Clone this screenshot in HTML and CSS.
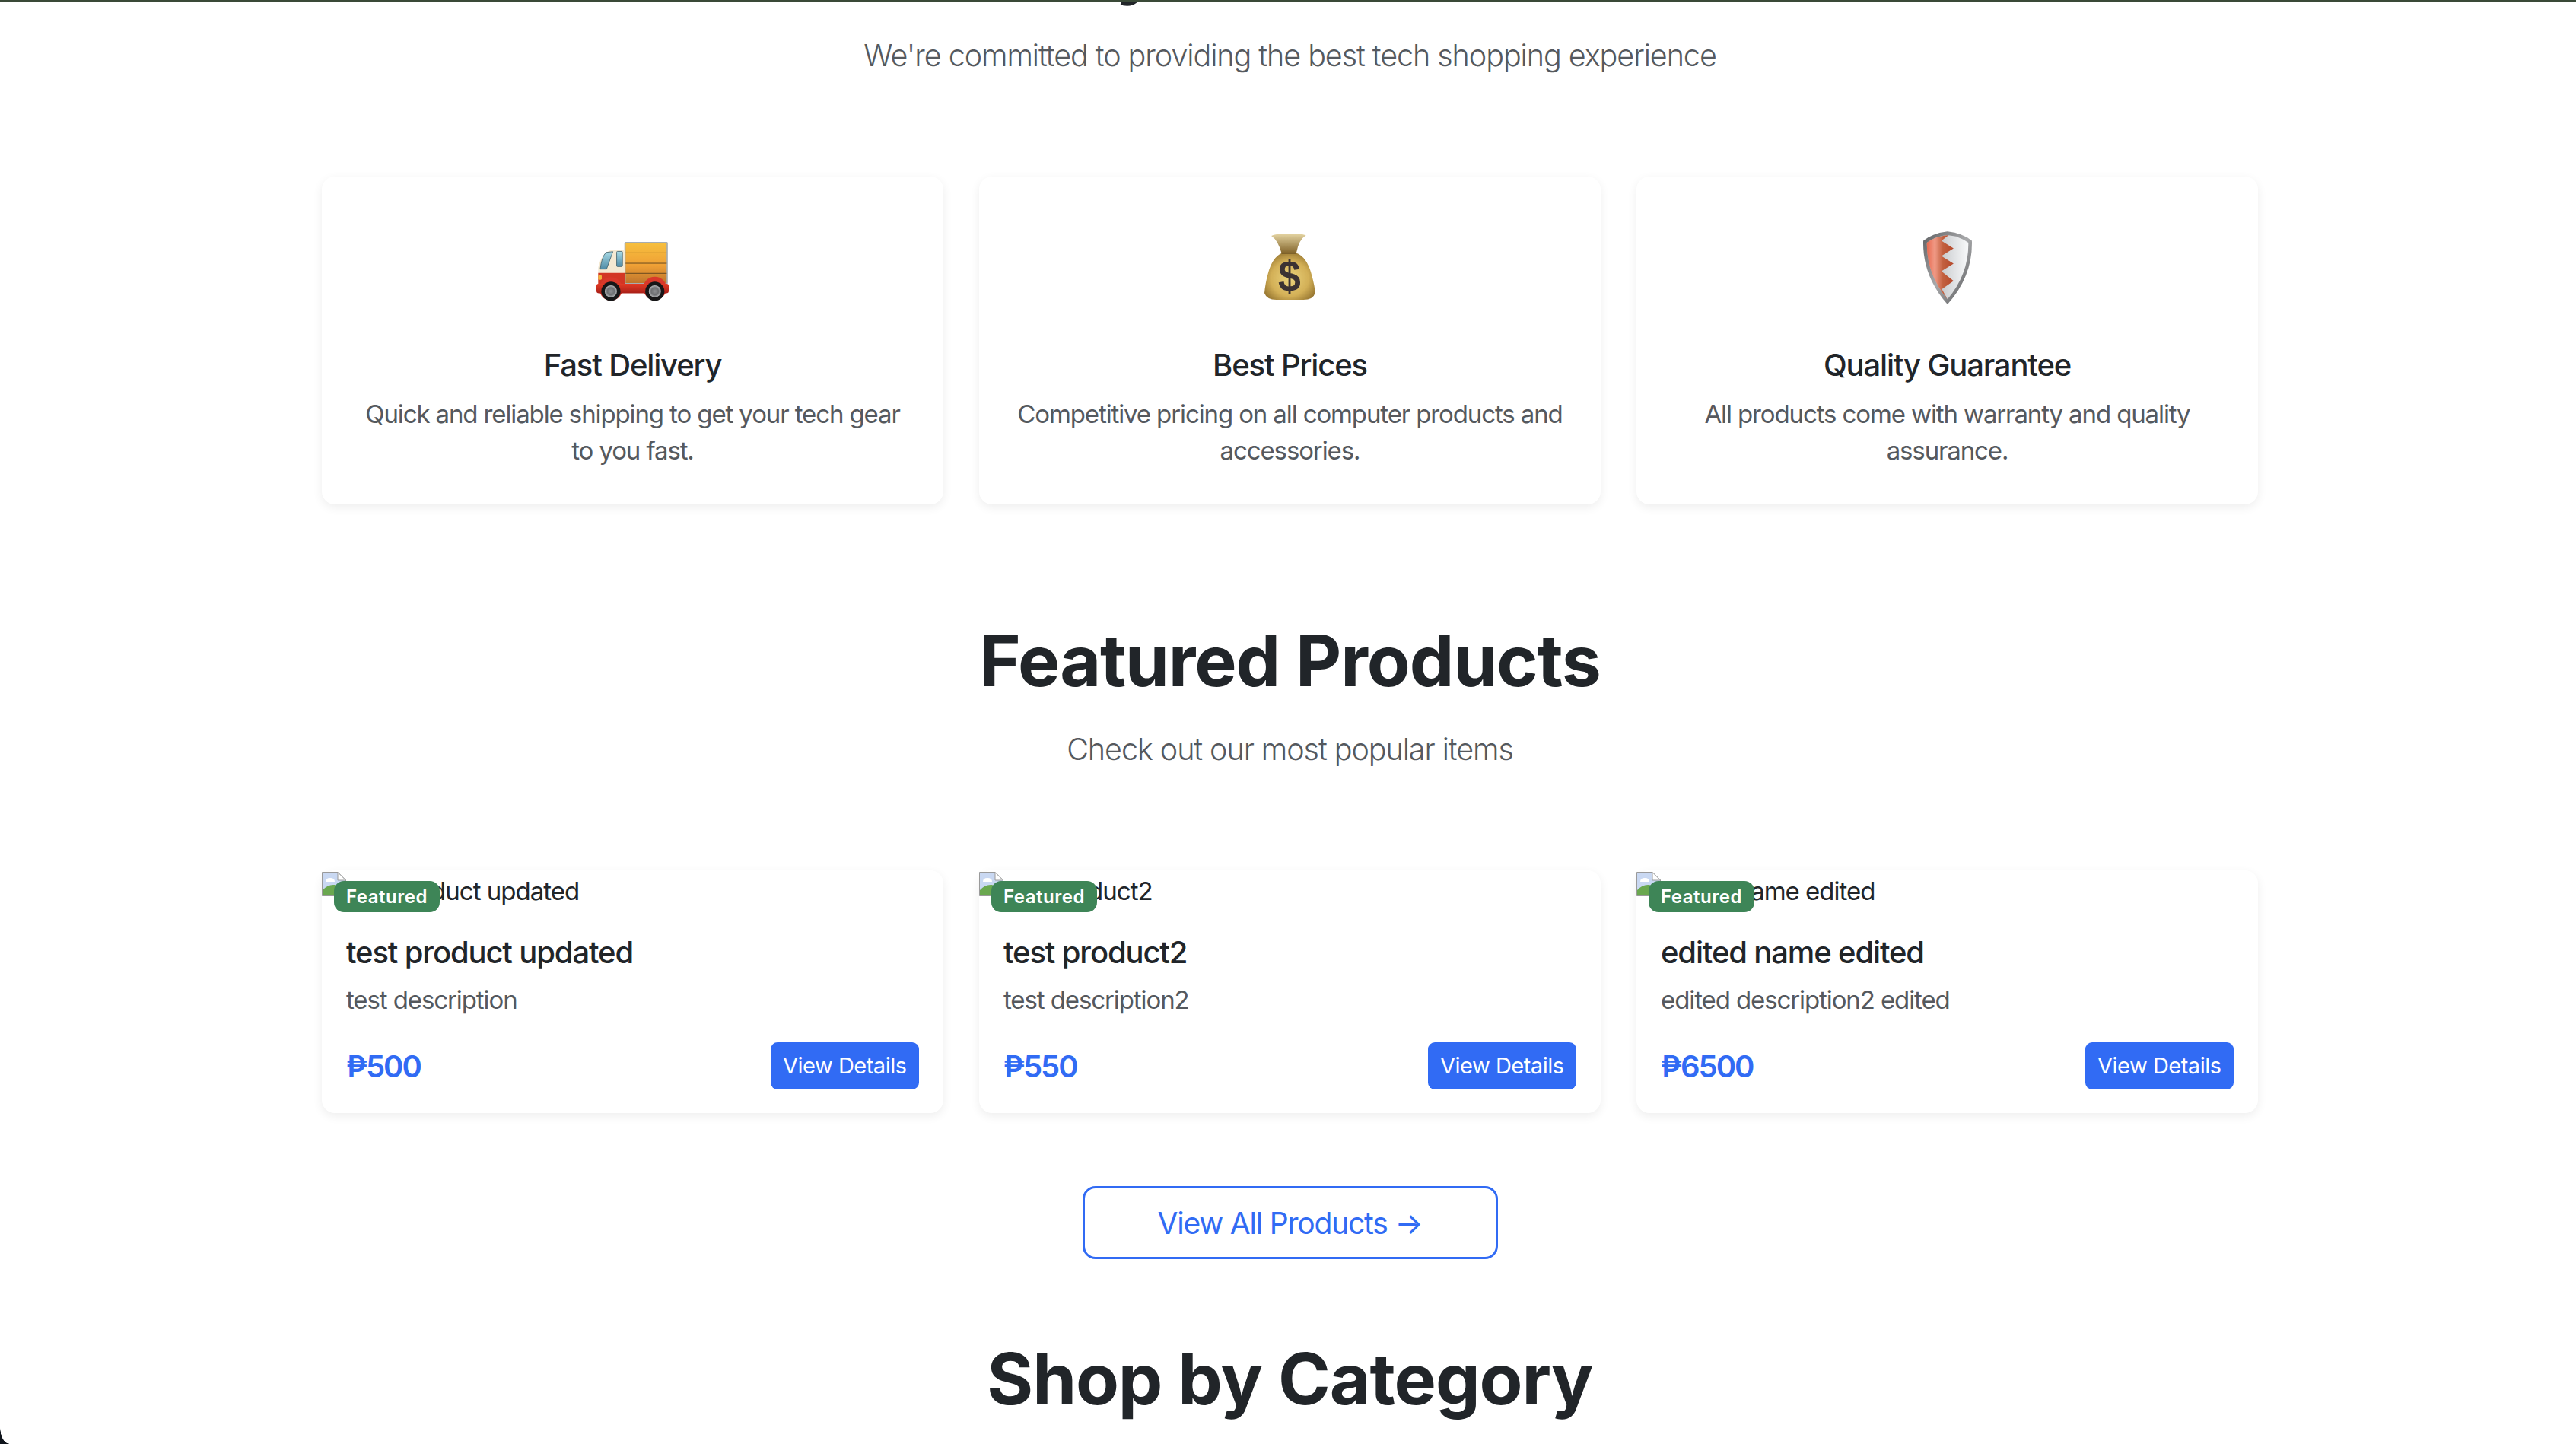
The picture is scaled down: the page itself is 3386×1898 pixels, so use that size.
FILE: index.html
```html
<!DOCTYPE html>
<html lang="en">
<head>
    <meta charset="UTF-8">
    <meta name="viewport" content="width=device-width, initial-scale=1.0">
    <title>Tech Shop</title>
    <link rel="stylesheet" href="styles.css">
</head>
<body>
    <div class="window">
        <main class="page">
            <section class="why">
                <h2 class="section-title">Why Choose Us?</h2>
                <p class="section-lead">We're committed to providing the best tech shopping experience</p>

                <div class="card-row">
                    <div class="card feature">
                        <div class="feature-icon">
                            <svg class="icon-truck" width="95" height="78" viewBox="130 115 286 234">
                                <defs>
                                    <linearGradient id="cargo" x1="0" y1="0" x2="0" y2="1">
                                        <stop offset="0" stop-color="#f7c03e"/>
                                        <stop offset="0.55" stop-color="#efa035"/>
                                        <stop offset="1" stop-color="#bd742c"/>
                                    </linearGradient>
                                    <linearGradient id="glass" x1="0" y1="0" x2="0" y2="1">
                                        <stop offset="0" stop-color="#a9dbe6"/>
                                        <stop offset="1" stop-color="#4f8ba6"/>
                                    </linearGradient>
                                    <linearGradient id="chassis" x1="0" y1="0" x2="0" y2="1">
                                        <stop offset="0" stop-color="#e33b25"/>
                                        <stop offset="1" stop-color="#a91f18"/>
                                    </linearGradient>
                                    <radialGradient id="hub">
                                        <stop offset="0" stop-color="#8d8f92"/>
                                        <stop offset="0.6" stop-color="#6d6f72"/>
                                        <stop offset="1" stop-color="#b6b8ba"/>
                                    </radialGradient>
                                </defs>
                                <rect x="243" y="117" width="167" height="163" rx="3" fill="url(#cargo)" stroke="#a7adb0" stroke-width="5"/>
                                <path d="M245 158H408M245 199H408M245 239H408" stroke="#6a4a1f" stroke-width="3"/>
                                <path d="M242 146H192Q150 155 137 216V284H242Z" fill="#f4e9d2"/>
                                <path d="M195 153L168 156Q150 175 145 222H170Z" fill="url(#glass)" stroke="#3f5f6b" stroke-width="2.5"/>
                                <rect x="210" y="152" width="23" height="60" rx="3" fill="url(#glass)" stroke="#3f5f6b" stroke-width="2.5"/>
                                <path d="M137 237H242V284H137Z" fill="#d33624"/>
                                <rect x="137" y="246" width="14" height="18" rx="4" fill="#f2b33d"/>
                                <circle cx="187" cy="300" r="46" fill="#d9382a"/>
                                <circle cx="361" cy="298" r="46" fill="#d9382a"/>
                                <path d="M130 288Q130 280 138 280H408Q416 280 416 288V308Q416 318 406 318H140Q130 318 130 308Z" fill="url(#chassis)"/>
                                <circle cx="187" cy="310" r="38" fill="#161617"/>
                                <circle cx="361" cy="310" r="38" fill="#161617"/>
                                <circle cx="187" cy="310" r="24" fill="url(#hub)"/>
                                <circle cx="361" cy="310" r="24" fill="url(#hub)"/>
                            </svg>
                        </div>
                        <h3 class="feature-name">Fast Delivery</h3>
                        <p class="feature-text">Quick and reliable shipping to get your tech gear to you fast.</p>
                    </div>

                    <div class="card feature">
                        <div class="feature-icon">
                            <svg class="icon-bag" width="67" height="87" viewBox="97 68 200 240" preserveAspectRatio="none">
                                <defs>
                                    <radialGradient id="sack" cx="0.5" cy="0.55" r="0.62">
                                        <stop offset="0" stop-color="#ead27c"/>
                                        <stop offset="0.6" stop-color="#d3b057"/>
                                        <stop offset="1" stop-color="#8f6f2c"/>
                                    </radialGradient>
                                    <linearGradient id="frill" x1="0" y1="0" x2="0" y2="1">
                                        <stop offset="0" stop-color="#e6d6a4"/>
                                        <stop offset="1" stop-color="#84662c"/>
                                    </linearGradient>
                                </defs>
                                <path d="M124 76Q150 66 196 70Q225 64 260 74Q232 90 222 138H164Q150 92 124 76Z" fill="url(#frill)"/>
                                <path d="M166 138H222Q262 152 280 210Q296 262 296 284Q288 308 250 308H144Q106 308 97 284Q100 250 112 210Q128 154 166 138Z" fill="url(#sack)"/>
                                <path d="M164 139H222" stroke="#4f3a19" stroke-width="4"/>
                                <text class="bag-sign" x="195" y="278" text-anchor="middle">$</text>
                            </svg>
                        </div>
                        <h3 class="feature-name">Best Prices</h3>
                        <p class="feature-text">Competitive pricing on all computer products and accessories.</p>
                    </div>

                    <div class="card feature">
                        <div class="feature-icon">
                            <svg width="64" height="96" viewBox="97 55 191 287">
                                <defs>
                                    <linearGradient id="rim" x1="0" y1="0" x2="1" y2="1">
                                        <stop offset="0" stop-color="#5f6062"/>
                                        <stop offset="0.5" stop-color="#a9aaac"/>
                                        <stop offset="1" stop-color="#4f5052"/>
                                    </linearGradient>
                                    <linearGradient id="plate" x1="0" y1="0" x2="1" y2="0">
                                        <stop offset="0" stop-color="#a9abae"/>
                                        <stop offset="0.55" stop-color="#d8dadc"/>
                                        <stop offset="1" stop-color="#f8f9fa"/>
                                    </linearGradient>
                                    <linearGradient id="red" x1="0" y1="0" x2="1" y2="0">
                                        <stop offset="0" stop-color="#e86a50"/>
                                        <stop offset="0.3" stop-color="#f09a86"/>
                                        <stop offset="0.6" stop-color="#c2603f"/>
                                        <stop offset="1" stop-color="#b5492c"/>
                                    </linearGradient>
                                </defs>
                                <path d="M192 56Q250 62 288 92Q292 230 192 342Q93 230 97 92Q135 62 192 56Z" fill="url(#rim)"/>
                                <path d="M192 70Q242 75 274 100Q276 222 192 322Q109 222 111 100Q143 75 192 70Z" fill="url(#plate)"/>
                                <path d="M197 70L168 92L216 122L168 152L216 182L168 212L216 250L170 282L192 322Q109 222 111 100Q143 75 197 70Z" fill="url(#red)"/>
                            </svg>
                        </div>
                        <h3 class="feature-name">Quality Guarantee</h3>
                        <p class="feature-text">All products come with warranty and quality assurance.</p>
                    </div>
                </div>
            </section>

            <section class="featured">
                <h2 class="section-title">Featured Products</h2>
                <p class="section-lead">Check out our most popular items</p>

                <div class="card-row">
                    <div class="card product">
                        <div class="product-image">
                            <svg class="broken-img" width="32" height="32" viewBox="0 0 32 32">
                                <path d="M.5.5H21L31.500 11V31.500H.5Z" fill="#c9d8f2" stroke="#9a9a9a"/>
                                <path d="M21 .5V11H31.500Z" fill="#fff" stroke="#9a9a9a"/>
                                <path d="M5 13Q5 8 11 8Q17 8 17 13Z" fill="#fff"/>
                                <path d="M1 31V24Q8 16 17 17Q25 20 30 31Z" fill="#6aa84f"/>
                            </svg>
                            <span>test product updated</span>
                        </div>
                        <span class="badge">Featured</span>
                        <div class="product-body">
                            <h3 class="product-name">test product updated</h3>
                            <p class="product-desc">test description</p>
                            <div class="product-foot">
                                <span class="price">₱500</span>
                                <a class="btn-details" href="#">View Details</a>
                            </div>
                        </div>
                    </div>

                    <div class="card product">
                        <div class="product-image">
                            <svg class="broken-img" width="32" height="32" viewBox="0 0 32 32">
                                <path d="M.5.5H21L31.500 11V31.500H.5Z" fill="#c9d8f2" stroke="#9a9a9a"/>
                                <path d="M21 .5V11H31.500Z" fill="#fff" stroke="#9a9a9a"/>
                                <path d="M5 13Q5 8 11 8Q17 8 17 13Z" fill="#fff"/>
                                <path d="M1 31V24Q8 16 17 17Q25 20 30 31Z" fill="#6aa84f"/>
                            </svg>
                            <span>test product2</span>
                        </div>
                        <span class="badge">Featured</span>
                        <div class="product-body">
                            <h3 class="product-name">test product2</h3>
                            <p class="product-desc">test description2</p>
                            <div class="product-foot">
                                <span class="price">₱550</span>
                                <a class="btn-details" href="#">View Details</a>
                            </div>
                        </div>
                    </div>

                    <div class="card product">
                        <div class="product-image">
                            <svg class="broken-img" width="32" height="32" viewBox="0 0 32 32">
                                <path d="M.5.5H21L31.500 11V31.500H.5Z" fill="#c9d8f2" stroke="#9a9a9a"/>
                                <path d="M21 .5V11H31.500Z" fill="#fff" stroke="#9a9a9a"/>
                                <path d="M5 13Q5 8 11 8Q17 8 17 13Z" fill="#fff"/>
                                <path d="M1 31V24Q8 16 17 17Q25 20 30 31Z" fill="#6aa84f"/>
                            </svg>
                            <span>edited name edited</span>
                        </div>
                        <span class="badge">Featured</span>
                        <div class="product-body">
                            <h3 class="product-name">edited name edited</h3>
                            <p class="product-desc">edited description2 edited</p>
                            <div class="product-foot">
                                <span class="price">₱6500</span>
                                <a class="btn-details" href="#">View Details</a>
                            </div>
                        </div>
                    </div>
                </div>

                <div class="all-products">
                    <a class="btn-all" href="#">View All Products →</a>
                </div>
            </section>

            <section class="categories">
                <h2 class="section-title">Shop by Category</h2>
            </section>
        </main>
        <div class="corner"></div>
    </div>
</body>
</html>
```

FILE: styles.css
```css
* {
    box-sizing: border-box;
}

html, body {
    margin: 0;
    height: 100%;
    overflow: hidden;
}

body {
    font-family: 'Inter', 'Liberation Sans', sans-serif;
    background: white;
    color: #212529;
}

.window {
    position: relative;
    height: 100vh;
    overflow: hidden;
    border-top: 3px solid #3a4a38;
}

.page {
    padding: 0 418px 0 423px;
    margin-top: -104px;
}

.section-title {
    margin: 0;
    font-size: 93px;
    line-height: 110px;
    font-weight: 700;
    letter-spacing: -1.100px;
    text-align: center;
    color: #212529;
}

.section-lead {
    margin: 34px 0 0;
    font-size: 39.500px;
    line-height: 56px;
    font-weight: 300;
    letter-spacing: -1.060px;
    text-align: center;
    color: #55595e;
}

.why .section-lead {
    margin-top: 36px;
}

.card-row {
    display: grid;
    grid-template-columns: repeat(3, 1fr);
    gap: 47px;
    margin-top: 131px;
}

.card {
    position: relative;
    background: white;
    border-radius: 17px;
    box-shadow: 0 4px 13px rgba(0, 0, 0, 0.07);
}

.feature {
    height: 431px;
    padding: 47px 40px;
    text-align: center;
}

.feature-icon {
    height: 146px;
    margin-bottom: 27px;
    display: flex;
    align-items: center;
    justify-content: center;
}

.icon-truck {
    margin-top: 10px;
}

.icon-bag {
    margin-bottom: 3px;
}

.bag-sign {
    font-family: 'Liberation Sans', sans-serif;
    font-size: 160px;
    font-weight: 700;
    fill: #3b3233;
}

.feature-name {
    margin: 0 0 12px;
    font-size: 40px;
    line-height: 56px;
    font-weight: 500;
    letter-spacing: -1.150px;
}

.feature-text {
    margin: 0;
    font-size: 33px;
    line-height: 48px;
    letter-spacing: -1.120px;
    color: #55595e;
}

.featured {
    margin-top: 150px;
}

.product-image {
    height: 54px;
    padding-top: 2px;
    display: flex;
    align-items: flex-start;
    font-size: 33px;
    line-height: 50px;
    letter-spacing: -1px;
}

.broken-img {
    flex: none;
}

.badge {
    position: absolute;
    left: 16px;
    top: 14px;
    padding: 0 16px;
    height: 41px;
    border-radius: 13px;
    background: #3e8557;
    color: white;
    font-size: 24px;
    line-height: 41px;
    font-weight: 600;
    letter-spacing: 0.500px;
}

.product-body {
    padding: 27px 32px 31px 32px;
}

.product-name {
    margin: 0 0 12px;
    font-size: 40px;
    line-height: 53px;
    font-weight: 500;
    letter-spacing: -1.150px;
}

.product-desc {
    margin: 0 0 32px;
    font-size: 33px;
    line-height: 48px;
    letter-spacing: -1.100px;
    color: #55595e;
}

.product-foot {
    display: flex;
    align-items: center;
    justify-content: space-between;
}

.price {
    font-size: 40px;
    font-weight: 600;
    letter-spacing: -2px;
    color: #316bf4;
}

.btn-details {
    display: block;
    height: 62px;
    padding: 0 16.500px;
    border-radius: 9px;
    background: #316bf4;
    color: white;
    font-size: 29px;
    line-height: 62px;
    letter-spacing: -0.500px;
    text-decoration: none;
}

.all-products {
    display: flex;
    justify-content: center;
    margin-top: 96px;
}

.btn-all {
    display: block;
    width: 546px;
    height: 96px;
    border: 3px solid #316bf4;
    border-radius: 17px;
    color: #316bf4;
    font-size: 39px;
    line-height: 92px;
    letter-spacing: -1.200px;
    text-align: center;
    text-decoration: none;
}

.categories {
    margin-top: 102px;
}

/* window corner of the screen capture */
.corner {
    position: absolute;
    left: 0;
    bottom: 0;
    width: 12px;
    height: 22px;
    background: radial-gradient(ellipse 12px 22px at 100% 0, transparent 96%, #10151c 100%);
}
```
